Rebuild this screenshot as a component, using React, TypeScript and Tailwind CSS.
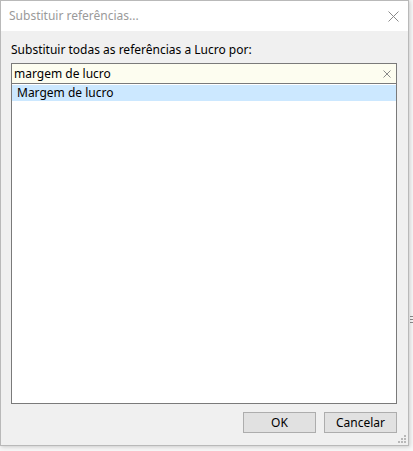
import React from "react";

export default function App() {
  const font = { fontFamily: "'Segoe UI', 'Noto Sans', 'Open Sans', sans-serif" };
  return (
    <div className="w-[413px] h-[451px] bg-[#f7f7f7] flex" style={font}>
      <div className="flex flex-col">
        <div className="relative w-[409px] h-[446px] flex flex-col border border-[#b9b9b9] shadow-[1px_1px_4px_rgba(0,0,0,0.18)] overflow-hidden">
          <div className="h-[30px] shrink-0 bg-white flex items-center justify-between pl-[8px] pr-[9px]">
            <span className="text-[12px] text-[#9a9a9a]">Substituir referências...</span>
            <svg width="11" height="11" viewBox="0 0 11 11" className="mt-[1px]">
              <path d="M0.5 0.5 L10.5 10.5 M10.5 0.5 L0.5 10.5" stroke="#8a8a8a" strokeWidth="1" fill="none" />
            </svg>
          </div>
          <div className="flex-1 bg-[#f0f0f0] flex flex-col pl-[10px] pr-[11px] pt-[11px]">
            <div className="text-[12px] leading-[16px] text-black">Substituir todas as referências a Lucro por:</div>
            <div className="mt-[5px] h-[21px] shrink-0 border border-[#7a7a7a] bg-[#fdfdf0] flex items-center justify-between pl-[2px] pr-[5px]">
              <span className="text-[12px] leading-[16px] text-black">margem de lucro</span>
              <svg width="8" height="8" viewBox="0 0 8 8">
                <path d="M0.5 0.5 L7.5 7.5 M7.5 0.5 L0.5 7.5" stroke="#8a8a8a" strokeWidth="1" fill="none" />
              </svg>
            </div>
            <div className="h-[320px] shrink-0 border border-t-0 border-[#7a7a7a] bg-white pt-[1px]">
              <div className="h-[16px] bg-[#cce8ff] flex items-center pl-[5px]">
                <span className="text-[12px] leading-[16px] text-black">Margem de lucro</span>
              </div>
            </div>
            <div className="flex justify-end gap-[8px] mt-[8px]">
              <button className="w-[73px] h-[21px] bg-[#e1e1e1] border border-[#adadad] text-[12px] text-black">OK</button>
              <button className="w-[73px] h-[21px] bg-[#e1e1e1] border border-[#adadad] text-[12px] text-black">Cancelar</button>
            </div>
          </div>
          <svg width="10" height="10" viewBox="0 0 10 10" className="absolute right-[1px] bottom-[1px]">
            <rect x="7" y="1" width="2" height="2" fill="#b8b8b8" />
            <rect x="4" y="4" width="2" height="2" fill="#b8b8b8" />
            <rect x="7" y="4" width="2" height="2" fill="#b8b8b8" />
            <rect x="1" y="7" width="2" height="2" fill="#b8b8b8" />
            <rect x="4" y="7" width="2" height="2" fill="#b8b8b8" />
            <rect x="7" y="7" width="2" height="2" fill="#b8b8b8" />
          </svg>
        </div>
      </div>
      <div className="flex-1 flex flex-col">
        <div className="mt-[316px] ml-[1px] flex flex-col gap-[2px]">
          <div className="h-[1px] w-[3px] bg-[#8a8a8a]" />
          <div className="h-[1px] w-[3px] bg-[#8a8a8a]" />
          <div className="h-[1px] w-[3px] bg-[#8a8a8a]" />
        </div>
      </div>
    </div>
  );
}
